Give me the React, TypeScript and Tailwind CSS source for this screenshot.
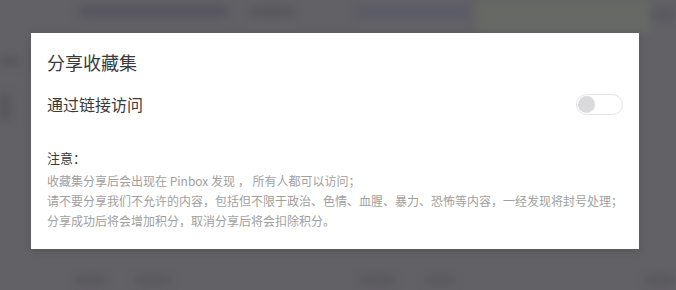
import { useState } from "react";

const font = { fontFamily: '"Noto Sans CJK SC", "Noto Sans", sans-serif' };

// the page behind the dialog, blurred and dimmed
function Backdrop() {
  return (
    <div className="absolute inset-0 flex flex-col blur-[4px]">
      <div className="flex h-[33px] items-start">
        <div className="flex flex-1 items-center gap-[22px] pl-[78px] pt-[6px]">
          <div className="h-[11px] w-[150px] rounded bg-[#56555e]" />
          <div className="h-[9px] w-[44px] rounded bg-[#57565c]" />
          <div className="ml-[40px] h-[10px] w-[115px] rounded bg-[#5a5966]" />
        </div>
        <div className="h-[33px] w-[175px] bg-[#676965]" />
        <div className="mt-[8px] h-[12px] w-[26px] rounded bg-[#5a5961]" />
      </div>
      <div className="flex flex-1 flex-col gap-[28px] pt-[24px]">
        <div className="h-[8px] w-[20px] rounded bg-[#56555a]" />
        <div className="h-[28px] w-[10px] rounded bg-[#57565b]" />
      </div>
      <div className="flex h-[20px] items-center gap-[30px] pl-[75px]">
        <div className="h-[8px] w-[30px] rounded bg-[#58575c]" />
        <div className="h-[8px] w-[35px] rounded bg-[#59585d]" />
        <div className="ml-[160px] h-[8px] w-[35px] rounded bg-[#58575c]" />
        <div className="h-[8px] w-[30px] rounded bg-[#5a595e]" />
        <div className="ml-auto h-[8px] w-[31px] rounded bg-[#58575c]" />
      </div>
    </div>
  );
}

export default function App() {
  const [shared, setShared] = useState(false);

  return (
    <div className="relative h-[290px] w-[676px] overflow-hidden bg-[#626166]" style={font}>
      <Backdrop />

      <div className="relative pl-[31px] pt-[33px]">
        <div className="w-[608px] bg-white px-4 pb-[18px] pt-[17px] shadow-[0_2px_8px_rgba(0,0,0,0.15)]">
          <h2 className="text-[18px] leading-6 text-[#3a3a3a]">分享收藏集</h2>

          <div className="mt-[18px] flex h-6 items-center justify-between">
            <span className="text-[16px] leading-6 text-[#3a3a3a]">通过链接访问</span>
            <button
              onClick={() => setShared(s => !s)}
              className={`flex h-[21px] w-[47px] items-center rounded-full border px-[1px] ${
                shared ? "justify-end border-[#4a90e2] bg-[#4a90e2]" : "justify-start border-[#e4e4e6] bg-white"
              }`}
            >
              <span className={`h-[17px] w-[17px] rounded-full ${shared ? "bg-white" : "bg-[#dadadd]"}`} />
            </button>
          </div>

          <div className="mt-[31px]">
            <p className="text-[13px] leading-[22px] text-[#3a3a3a]">注意：</p>
            <div className="mt-[2px] text-[12px] leading-5 text-[#a0a0a0]">
              <p>收藏集分享后会出现在 Pinbox 发现 ， 所有人都可以访问；</p>
              <p>请不要分享我们不允许的内容，包括但不限于政治、色情、血腥、暴力、恐怖等内容，一经发现将封号处理；</p>
              <p>分享成功后将会增加积分，取消分享后将会扣除积分。</p>
            </div>
          </div>
        </div>
      </div>
    </div>
  );
}
